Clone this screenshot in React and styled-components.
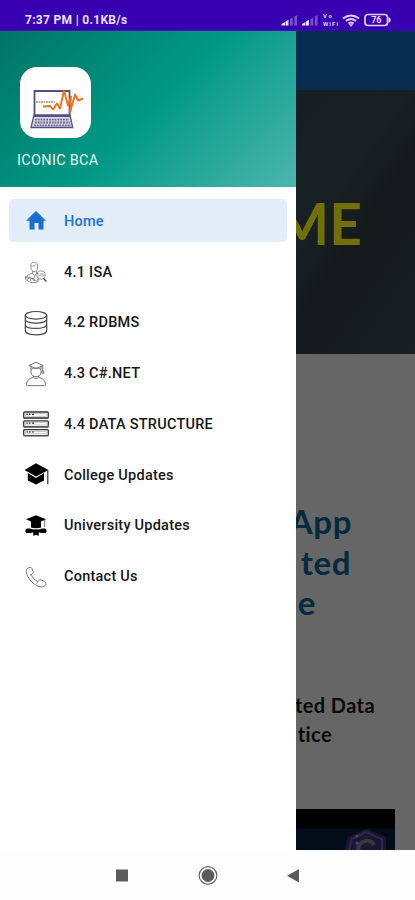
import React from "react";
import styled, { createGlobalStyle } from "styled-components";

const menu = [
  { label: "Home", icon: "home" },
  { label: "4.1 ISA", icon: "analyst" },
  { label: "4.2 RDBMS", icon: "database" },
  { label: "4.3 C#.NET", icon: "student" },
  { label: "4.4 DATA STRUCTURE", icon: "server" },
  { label: "College Updates", icon: "cap" },
  { label: "University Updates", icon: "university" },
  { label: "Contact Us", icon: "phone" },
];

const MenuIcon = ({ name }) => {
  switch (name) {
    case "home":
      return (
        <Icon viewBox="0 0 28 28">
          <path d="M14 4 24 13.700h-2.500V22.500h-5V16h-4v6.500h-5v-8.800H4z" fill="#176fd0" />
        </Icon>
      );
    case "analyst":
      return (
        <Icon viewBox="0 0 28 28" fill="none" stroke="#777" strokeWidth="0.8">
          <path d="M9 9V6.5C9 3.5 15.500 3.500 15.500 6.500V10C15.500 12 14 13.500 12.300 13.500S9 12 9 10zM9.500 8c2 .5 4-.5 4.500-1.500M10.500 13v2.500l2 2 2-2V13M10.500 15 5.500 17.200 4.500 20.500M12.500 17.500l-1 4M14.500 15l2 .7" />
          <path d="M3.500 18.500l5 1.500 3 2.500 5 .5-2 1.500H9l-5.500-3zM5 21.500l3-2 5 2M8 20l1 3.500" />
          <circle cx="19" cy="17" r="4.100" />
          <path d="M17 18.500v-2M19 18.500v-3.500M21 18.500v-3M15 22l2-1" />
          <path d="m21.500 20.500 3 3" stroke="#555" strokeWidth="1.500" />
        </Icon>
      );
    case "database":
      return (
        <Icon viewBox="0 0 28 28" fill="none" stroke="#444" strokeWidth="1.200">
          <ellipse cx="14" cy="6.300" rx="10.700" ry="3.800" />
          <path d="M3.300 6.300v4c0 5 21.400 5 21.400 0v-4M3.300 12.200v3.500c0 5 21.400 5 21.400 0v-3.500M3.300 17.800v4c0 5.400 21.400 5.400 21.400 0v-4M3.300 10.300v2M24.700 10.300v2M3.300 15.700v2M24.700 15.700v2" />
        </Icon>
      );
    case "student":
      return (
        <Icon viewBox="0 0 28 28" fill="none" stroke="#666" strokeWidth="0.900">
          <path d="M6.800 5.500 14 2.300l7.200 3.200L14 8.700zM9 6.700v5.500c0 6 10 6 10 0V6.700M9 9.500c3-2 7-2 10 0M20.800 5.700v5.500M20 11.200h1.800v2H20zM11.500 15.800v1.500c-4 1-7 3-7 7.300 0 .9.300 1 1 1h17c.7 0 1-.1 1-1 0-4.300-3-6.300-7-7.300v-1.500M11.500 17.300c1 1.500 4 1.500 5 0" />
        </Icon>
      );
    case "server":
      return (
        <Icon viewBox="0 0 28 28" fill="none" stroke="#333" strokeWidth="1.300">
          {[2, 10.8, 19.6].map((y) => (
            <g key={y}>
              <rect x="1.700" y={y} width="24.600" height="6" rx="1" />
              <rect x="3.600" y={y + 1.8} width="20.800" height="2.400" stroke="#999" strokeWidth="0.500" />
              <path d={`M4.500 ${y + 2.4}h1.300M7 ${y + 2.4}h1.500M10 ${y + 2.4}h2`} strokeWidth="1.200" />
              <path d={`M1.500 ${y + 6.2}h25`} stroke="#555" strokeWidth="1" />
            </g>
          ))}
        </Icon>
      );
    case "cap":
      return (
        <Icon viewBox="0 0 28 28">
          <path d="M14 2.300 26.500 9 14 15.500 2.500 9z" />
          <path d="M5.800 12 14 17l8-5v7.600L14 23.500l-8.200-3.900z" />
          <path d="M25.800 9.300v14" stroke="#222" strokeWidth="1.100" />
        </Icon>
      );
    case "university":
      return (
        <Icon viewBox="0 0 28 28">
          <path d="M14 3.300 24 7.200l-5 2.400v6c-2 1-8 1-10 0v-6L4 7.200z" />
          <path d="M22.700 8v7" stroke="#333" strokeWidth="0.700" />
          <path d="M4.500 16.700c2-.5 4.500 0 6 .5h7c1.500-.5 4-1 6-.5 1.500.5 1.500 3.800 0 4.200-2 .4-4.500 0-6-.4h-7c-1.500.4-4 .8-6 .4-1.500-.4-1.500-3.700 0-4.200z" />
          <path d="M11.300 19h5.400v5L14 22.800 11.300 24z" />
          <path d="M9 16.500c3 .5 7 .5 10 0" stroke="#fff" strokeWidth="0.500" fill="none" />
        </Icon>
      );
    default:
      return (
        <Icon viewBox="0 0 28 28" fill="none" stroke="#666" strokeWidth="0.900">
          <path d="M6 5c1.300-1.200 3-1 3.900.4l1.200 3c.5 1.300-.6 2.300-1.800 3.100 1.200 3.400 3.500 5.700 6.500 7.200.9-1.500 2-2.300 3.400-1.800l3.500 1.500c1.500.8 1.700 2.700.6 4-1.600 1.700-3.800 1.900-6.300 1.200C10 21 4.700 14 4.400 8.700 4.300 7.200 4.800 5.900 6 5zM8 12.200l1.500-.9M15.700 19l-1 1.300" />
        </Icon>
      );
  }
};

const Logo = () => (
  <LogoBox>
    <svg width="71" height="71" viewBox="0 0 71 71" fill="none">
      <path d="M14.500 48V24h35v24" stroke="#565080" strokeWidth="1.800" />
      <path d="M14 48h36l2.700 12.500H11z" fill="#d9d7e7" stroke="#565080" strokeWidth="1.300" />
      <path d="M14 49h36" stroke="#565080" strokeWidth="2" />
      <path d="M15 52.700h34M15 55.500h35M14 58.300h37" stroke="#68628e" strokeWidth="1.800" strokeDasharray="1.800 1" />
      <path d="M16 35h19" stroke="#666" strokeWidth="1.200" strokeDasharray="2 .5" />
      <path d="m23 39.500 7-.5 3 3.500 4-6 3 5 4-18 4 15 3-9-1 16 5-18 3 6 5-2" stroke="#ed731f" strokeWidth="1.900" strokeLinejoin="round" />
    </svg>
  </LogoBox>
);

const StatusIcons = () => (
  <svg width="111" height="16" viewBox="0 0 111 16" fill="#e8defa">
    {[0.5, 21].map((x) => (
      <g key={x}>
        <path d={`M${x} 13.500v-1.500l3.500-2v3.500z`} />
        <path d={`M${x + 4} 13.500V9.500l3-1.700v5.700z`} />
        <path d={`M${x + 8.5} 13.500V7l2.800-1.500v8zM${x + 12.8} 13.500V4.500l2.800-1.500v10.500z`} opacity=".35" />
      </g>
    ))}
    <g fill="none" stroke="#dcd2f5" strokeWidth="1.900">
      <path d="M62 6.500c5-3.800 11-3.800 16 0M65 9c3-2.400 7-2.400 10 0M67.500 11.500c1.600-1.300 3.400-1.300 5 0" />
    </g>
    <path d="m67.500 12.300 2.500 2.500 2.500-2.500z" fill="#dcd2f5" />
    <rect x="84" y="2.500" width="22.500" height="11" rx="3" fill="none" stroke="#dcd2f5" strokeWidth="1.700" />
    <path d="M107.500 5.300c3 .5 3 5 0 5.500z" fill="#dcd2f5" />
    <text x="95.300" y="11.400" textAnchor="middle" fontFamily="Roboto, sans-serif" fontSize="9" fontWeight="700">76</text>
    <g fontFamily="Roboto, sans-serif" fontSize="6" fontWeight="700" fill="#dcd2f5">
      <text x="42" y="6" textLength="9">Vo</text>
      <text x="42" y="14" textLength="15">WiFi</text>
    </g>
  </svg>
);

const App = () => {
  const [active, setActive] = React.useState("Home");

  return (
    <>
      <GlobalStyle />
      <Screen>
        <StatusBar>
          <Clock>7:37 PM | 0.1KB/s</Clock>
          <StatusIcons />
        </StatusBar>
        <Content>
          <Toolbar />
          <Banner>ME</Banner>
          <Article>
            <Title>
              <Line $end={63}>App</Line>
              <Line $end={64}>ted</Line>
              <Line $end={99}>e</Line>
            </Title>
            <Summary>
              <Line $end={40}>ted Data</Line>
              <Line $end={83}>tice</Line>
            </Summary>
            <Video>
              <svg width="42" height="21" viewBox="0 0 42 21">
                <path d="M0 21 3 8 21 0l20 8v13z" fill="#1b1730" />
                <path d="M4 21 7 10l14-7 16 7v11" fill="none" stroke="#302649" strokeWidth="2" />
                <path d="M13 21c1-10 12-12 16-5" fill="none" stroke="#3b3742" strokeWidth="4" />
                <circle cx="12" cy="7" r="1.500" fill="#4b4963" />
                <circle cx="12" cy="14" r="1.500" fill="#4b4963" />
              </svg>
            </Video>
          </Article>
          <Drawer>
            <Header>
              <Logo />
              <AppName>ICONIC BCA</AppName>
            </Header>
            <Menu>
              {menu.map((item) => (
                <MenuItem
                  key={item.label}
                  $active={active === item.label}
                  onClick={() => setActive(item.label)}
                >
                  <MenuIcon name={item.icon} />
                  {item.label}
                </MenuItem>
              ))}
            </Menu>
          </Drawer>
        </Content>
        <NavBar>
          <svg width="415" height="50" viewBox="0 0 415 50" fill="#5c5c5c">
            <rect x="116" y="19.500" width="12" height="12" />
            <circle cx="208" cy="25.500" r="6.400" />
            <circle cx="208" cy="25.500" r="8.800" fill="none" stroke="#666" strokeWidth="1.200" />
            <path d="M299 19v13.500l-12-6.700z" />
          </svg>
        </NavBar>
      </Screen>
    </>
  );
};

const GlobalStyle = createGlobalStyle`
  * {
    box-sizing: border-box;
  }
  body {
    margin: 0;
  }
`;

const Screen = styled.div`
  display: flex;
  flex-direction: column;
  width: 415px;
  height: 900px;
  overflow: hidden;
  background: #fff;
  font-family: Roboto, sans-serif;
`;

const StatusBar = styled.div`
  display: flex;
  align-items: center;
  justify-content: space-between;
  height: 31px;
  padding: 8px 23px 0 25px;
  background: #3900b1;
`;

const Clock = styled.span`
  font-size: 12px;
  font-weight: 700;
  letter-spacing: 0.3px;
  color: #e9e0fb;
  white-space: nowrap;
`;

const Content = styled.main`
  position: relative;
  display: flex;
  flex-direction: column;
  height: 819px;
  overflow: hidden;
  background: #666;
  font-family: Lato, sans-serif;
  font-weight: 700;
`;

const Toolbar = styled.div`
  height: 59px;
  background: #082d50;
`;

const Banner = styled.div`
  height: 264px;
  padding: 99px 53px 0 0;
  background: linear-gradient(125deg, #171d20 0%, #182023 68%, #15181d 78%, #182023 100%);
  color: #706f08;
  font-size: 57px;
  line-height: 68px;
  text-align: right;
`;

const Article = styled.div`
  flex: 1;
`;

const Line = styled.div`
  padding-right: ${({ $end }) => $end}px;
  text-align: right;
`;

const Title = styled.div`
  padding-top: 147px;
  color: #042b3d;
  font-size: 33px;
  letter-spacing: 0.6px;
  line-height: 40.5px;
`;

const Summary = styled.div`
  padding-top: 68px;
  color: #090909;
  font-size: 20px;
  letter-spacing: 0.4px;
  line-height: 29.5px;
`;

const Video = styled.div`
  display: flex;
  align-items: flex-end;
  justify-content: flex-end;
  width: 375px;
  height: 41px;
  margin: 59px 0 0 20px;
  padding-right: 8px;
  background: linear-gradient(#000 0 19px, #020d19 20px);
`;

const Drawer = styled.aside`
  position: absolute;
  top: 0;
  left: 0;
  width: 296px;
  height: 100%;
  background: #fff;
  font-family: Roboto, sans-serif;
`;

const Header = styled.div`
  height: 156px;
  padding: 36px 0 0 17px;
  background: linear-gradient(135deg, #007466 0%, #009885 50%, #4db6ac 100%);
`;

const LogoBox = styled.div`
  width: 71px;
  height: 71px;
  margin-left: 3px;
  border-radius: 17px;
  background: #fff;
`;

const AppName = styled.div`
  margin-top: 14px;
  color: #e5f6f3;
  font-size: 14.5px;
  font-weight: 400;
  letter-spacing: 0.3px;
  line-height: 18px;
`;

const Menu = styled.nav`
  display: flex;
  flex-direction: column;
  gap: 8.25px;
  padding: 12px 9px 0;
`;

const MenuItem = styled.button`
  display: flex;
  align-items: center;
  gap: 14px;
  height: 42.5px;
  padding: 2px 13px 0;
  border: 0 none;
  border-radius: 5px;
  background: ${({ $active }) => ($active ? "#e3edf9" : "transparent")};
  color: ${({ $active }) => ($active ? "#1873d2" : "#171717")};
  font-family: inherit;
  font-size: 14.5px;
  font-weight: 500;
  letter-spacing: 0.24px;
  white-space: nowrap;
  cursor: pointer;
`;

const Icon = styled.svg`
  flex: none;
  width: 28px;
  height: 28px;
`;

const NavBar = styled.footer`
  height: 50px;
  background: #fefefe;
`;

export default App;
